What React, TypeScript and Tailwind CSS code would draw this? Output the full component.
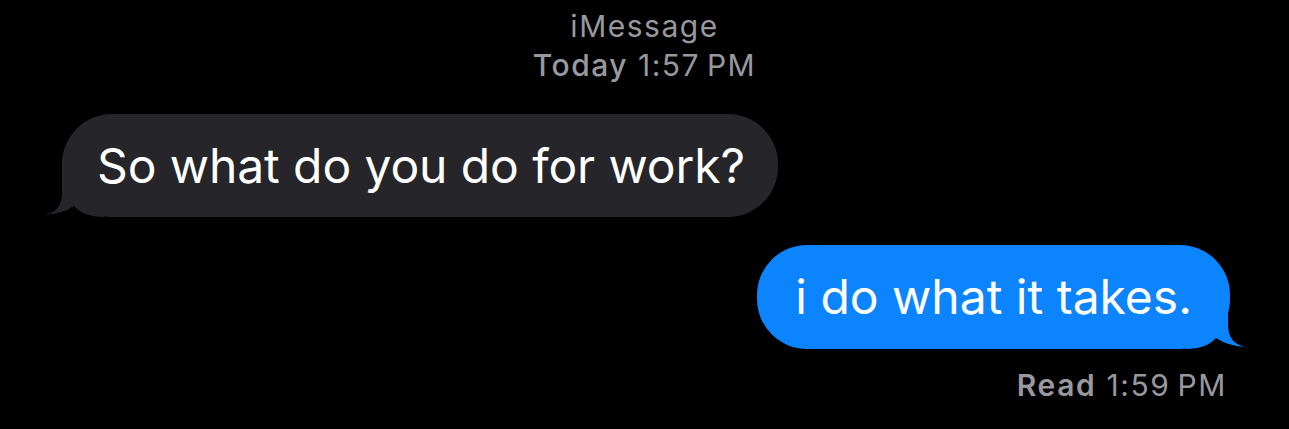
import React from 'react';

const Tail = ({ color, flip }: { color: string; flip?: boolean }) => (
  <svg
    className={`absolute bottom-0 w-[60px] h-[58px] ${flip ? '-right-[16px] -scale-x-100' : '-left-[18px]'}`}
    viewBox="0 0 60 58"
    fill={color}
  >
    <path d="M18 0 L18 34 Q18 52 1 56 Q18 55 30 47 Q40 58 60 58 L60 0 Z" />
  </svg>
);

const App: React.FC = () => {
  return (
    <div className="w-[1289px] h-[429px] bg-black overflow-hidden font-['Inter',sans-serif] text-white flex flex-col">
      {/* Header */}
      <div className="pt-[7px] flex flex-col items-center text-[30px] leading-[39px] tracking-[1.5px] text-[#98989e]">
        <div>iMessage</div>
        <div>
          <span className="font-medium">Today</span> 1:57{'\u2009'}PM
        </div>
      </div>

      {/* Incoming */}
      <div className="mt-[29px] pl-[62px] flex">
        <div className="relative h-[103px] pl-[35px] pr-[33px] rounded-[50px] bg-[#262529] flex items-center text-[48px] tracking-[-0.1px]">
          <Tail color="#262529" />
          <span className="relative">So what do you do for work?</span>
        </div>
      </div>

      {/* Outgoing */}
      <div className="mt-[28px] pr-[59px] flex justify-end">
        <div className="relative h-[104px] px-[38px] rounded-[50px] bg-[#0b84fe] flex items-center text-[48px]">
          <Tail color="#0b84fe" flip />
          <span className="relative">i do what it takes.</span>
        </div>
      </div>

      <div className="mt-[18px] pr-[62px] flex justify-end text-[30px] leading-[36px] tracking-[1.6px] text-[#98989e]">
        <span className="font-semibold">Read</span>
        <span>&nbsp;1:59{'\u2009'}PM</span>
      </div>
    </div>
  );
};

export default App;
